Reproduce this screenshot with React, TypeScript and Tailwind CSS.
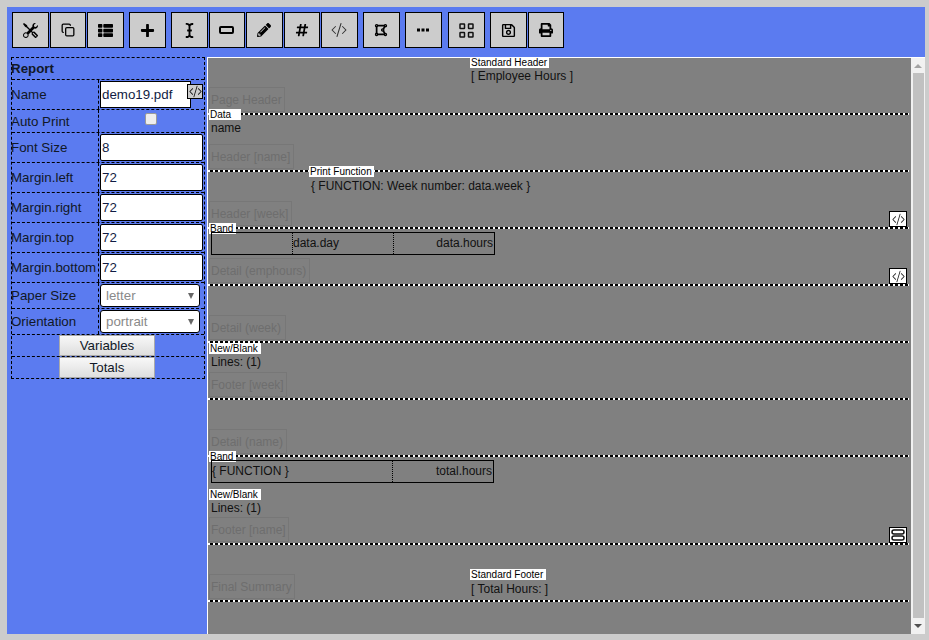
import { FaPlus, FaICursor, FaPencilAlt, FaHashtag, FaDrawPolygon, FaThList, FaRegSave, FaPrint } from 'react-icons/fa'
import { BsCodeSlash, BsTools } from 'react-icons/bs'
import { Copy } from 'lucide-react'
import type { ReactNode } from 'react'

const FONT = "font-['Liberation_Sans',Arial,sans-serif]"

function StackIcon() {
  return (
    <svg width="14" height="12" viewBox="0 0 14 12" fill="none" stroke="#111" strokeWidth="1.500">
      <rect x="1" y="1" width="12" height="4" rx="2" />
      <rect x="1" y="7" width="12" height="4" rx="2" />
    </svg>
  )
}

function DotsIcon() {
  return (
    <svg width="12" height="4" viewBox="0 0 12 4" fill="#000">
      <rect x="0" y="0.500" width="3" height="3" />
      <rect x="4.500" y="0.500" width="3" height="3" />
      <rect x="9" y="0.500" width="3" height="3" />
    </svg>
  )
}

function GridIcon() {
  return (
    <svg width="15" height="15" viewBox="0 0 15 15" fill="none" stroke="#111" strokeWidth="1.500">
      <rect x="1" y="1" width="4.500" height="4.500" rx="0.500" />
      <rect x="9.500" y="1" width="4.500" height="4.500" rx="0.500" />
      <rect x="1" y="9.500" width="4.500" height="4.500" rx="0.500" />
      <rect x="9.500" y="9.500" width="4.500" height="4.500" rx="0.500" />
    </svg>
  )
}

function ToolButton({ children, className = '' }: { children: ReactNode; className?: string }) {
  return (
    <button className={`flex h-[36px] w-[36.500px] shrink-0 items-center justify-center border border-black bg-[#cccccc] text-black ${className}`}>
      {children}
    </button>
  )
}

function PropRow({ label, children, h, labelClass = '' }: { label: string; children: ReactNode; h: string; labelClass?: string }) {
  return (
    <div className={`flex border-b border-dashed border-black ${h}`}>
      <div className="flex w-[87px] shrink-0 items-center border-r border-dashed border-black text-[13.333px] text-[#111827]">
        <span className={`-ml-[1px] ${labelClass}`}>{label}</span>
      </div>
      <div className="flex min-w-0 flex-1 items-center pl-[1px]">{children}</div>
    </div>
  )
}

function NumField({ value }: { value: string }) {
  return (
    <div className="flex h-[27px] w-[103px] items-center rounded-[2px] border border-black bg-white pl-[1px] text-[13.333px] text-[#111c44]">
      {value}
    </div>
  )
}

function SelectField({ value }: { value: string }) {
  return (
    <div className="flex h-[23px] w-[100px] items-center justify-between rounded-[3px] border border-black bg-white pl-[5px] pr-[5px] text-[13.333px] text-[#8a8a8a]">
      <span>{value}</span>
      <span className="h-0 w-0 border-x-[3.500px] border-t-[6px] border-x-transparent border-t-[#666]" />
    </div>
  )
}

function GreyButton({ label }: { label: string }) {
  return (
    <div className="-ml-[2px] flex h-[21px] w-[96px] items-center justify-center border border-[#aaa] bg-gradient-to-b from-[#f8f8f8] to-[#dedede] text-[13.333px] text-[#111827]">
      {label}
    </div>
  )
}

function Tag({ children, className = '' }: { children: ReactNode; className?: string }) {
  return <div className={`absolute bg-white pl-[1px] text-[10px] leading-[11px] text-black ${className}`}>{children}</div>
}

function Ghost({ label, className = '' }: { label: string; className?: string }) {
  return (
    <div className={`absolute bottom-[3px] left-[1px] flex h-[25px] items-center whitespace-nowrap border border-[#777] px-[1px] text-[12px] text-[#6e6e6e] ${className}`}>
      {label}
    </div>
  )
}

function Band({ h, ghost, gw, children }: { h: string; ghost: string; gw: string; children?: ReactNode }) {
  return (
    <div className={`relative ${h}`}>
      <div className="absolute inset-x-0 bottom-0 h-[2px] bg-[repeating-linear-gradient(90deg,#fff_0,#fff_2px,#000_2px,#000_5px)]" />
      <Ghost label={ghost} className={gw} />
      {children}
    </div>
  )
}

function Badge({ children }: { children: ReactNode }) {
  return (
    <div className="absolute bottom-[2px] right-[2px] flex h-[16px] w-[18px] items-center justify-center border border-black bg-white">
      {children}
    </div>
  )
}

export default function App() {
  return (
    <div className={`h-[640px] w-[929px] overflow-hidden bg-[#cccccc] p-[7px] pr-[4px] ${FONT}`}>
      <div className="flex h-[627px] flex-col bg-[#5b7bf0]">
        <div className="flex h-[50px] shrink-0 items-start gap-[1px] pl-[5px] pt-[5px]">
          <ToolButton><BsTools size={15} /></ToolButton>
          <ToolButton><Copy size={14} strokeWidth={2.200} color="#000" /></ToolButton>
          <ToolButton><FaThList size={15} /></ToolButton>
          <ToolButton className="ml-[4.500px]"><FaPlus size={15} /></ToolButton>
          <ToolButton className="ml-[4.500px]"><FaICursor size={15} /></ToolButton>
          <ToolButton>
            <span className="block h-[8px] w-[15px] rounded-[2px] border-2 border-black" />
          </ToolButton>
          <ToolButton><FaPencilAlt size={14} /></ToolButton>
          <ToolButton><FaHashtag size={14} /></ToolButton>
          <ToolButton><BsCodeSlash size={16} color="#333" /></ToolButton>
          <ToolButton className="ml-[4.500px]"><FaDrawPolygon size={14} /></ToolButton>
          <ToolButton className="ml-[4.500px]"><DotsIcon /></ToolButton>
          <ToolButton className="ml-[5.500px]"><GridIcon /></ToolButton>
          <ToolButton className="ml-[4.500px]"><FaRegSave size={15} /></ToolButton>
          <ToolButton><FaPrint size={14} /></ToolButton>
        </div>

        <div className="flex min-h-0 flex-1">
          <div className="w-[200px] shrink-0 pl-[4px]">
            <div className="w-[194px] border border-dashed border-black">
              <div className="flex h-[22px] items-center border-b border-dashed border-black text-[13.333px] font-bold text-[#111827]">
                <span className="-ml-[1px]">Report</span>
              </div>
              <PropRow label="Name" h="h-[30px]">
                <div className="relative">
                  <div className="flex h-[27px] w-[91px] items-center border border-black bg-white pl-[1px] text-[13.333px] text-[#111c44]">
                    demo19.pdf
                  </div>
                  <div className="absolute left-[87px] top-[3px] flex h-[15px] w-[16px] items-center justify-center border border-black bg-[#cccccc]">
                    <BsCodeSlash size={13} color="#111" />
                  </div>
                </div>
              </PropRow>
              <PropRow label="Auto Print" h="h-[23px]" labelClass="mt-[1px]">
                <div className="flex h-full w-full justify-center pr-[2px] pt-[3px]">
                  <span className="block h-[12px] w-[12px] rounded-[2px] border border-[#9a9a9a] bg-[#eeeeee]" />
                </div>
              </PropRow>
              <PropRow label="Font Size" h="h-[30px]"><NumField value="8" /></PropRow>
              <PropRow label="Margin.left" h="h-[30px]"><NumField value="72" /></PropRow>
              <PropRow label="Margin.right" h="h-[30px]"><NumField value="72" /></PropRow>
              <PropRow label="Margin.top" h="h-[30px]"><NumField value="72" /></PropRow>
              <PropRow label="Margin.bottom" h="h-[30px]"><NumField value="72" /></PropRow>
              <PropRow label="Paper Size" h="h-[26px]"><SelectField value="letter" /></PropRow>
              <PropRow label="Orientation" h="h-[26px]"><SelectField value="portrait" /></PropRow>
              <div className="flex h-[22px] justify-center border-b border-dashed border-black"><GreyButton label="Variables" /></div>
              <div className="flex h-[21px] justify-center"><GreyButton label="Totals" /></div>
            </div>
          </div>

          <div className="flex min-w-0 flex-1 border-l border-t border-white">
            <div className="min-w-0 flex-1 overflow-hidden bg-[#808080] pr-[2px] text-[12px] text-[#111]">
              <Band h="h-[57px]" ghost="Page Header" gw="w-[76px]">
                <Tag className="left-[262px] top-[-1px] w-[79px]">Standard Header</Tag>
                <div className="absolute left-[263px] top-[9px]">[ Employee Hours ]</div>
              </Band>
              <Band h="h-[57px]" ghost="Header [name]" gw="w-[85px]">
                <Tag className="left-[1px] top-[-6px] w-[32px]">Data</Tag>
                <div className="absolute left-[3px] top-[4px]">name</div>
              </Band>
              <Band h="h-[57px]" ghost="Header [week]" gw="w-[83px]">
                <Tag className="left-[101px] top-[-6px] w-[65px]">Print Function</Tag>
                <div className="absolute left-[103px] top-[5px]">{'{ FUNCTION: Week number: data.week }'}</div>
                <Badge><BsCodeSlash size={13} color="#222" /></Badge>
              </Band>
              <Band h="h-[57px]" ghost="Detail (emphours)" gw="w-[101px]">
                <Tag className="left-[1px] top-[-6px] w-[27px]">Band</Tag>
                <div className="absolute left-[3px] top-[3px] flex h-[23px] w-[284px] border border-black leading-[21px]">
                  <div className="w-[81px] border-r border-dotted border-black" />
                  <div className="w-[101px] border-r border-dotted border-black">data.day</div>
                  <div className="flex-1 pr-[1px] text-right">data.hours</div>
                </div>
                <Badge><BsCodeSlash size={13} color="#222" /></Badge>
              </Band>
              <Band h="h-[57px]" ghost="Detail (week)" gw="w-[77px]" />
              <Band h="h-[57px]" ghost="Footer [week]" gw="w-[78px]">
                <Tag className="left-[1px] top-0 w-[52px]">New/Blank</Tag>
                <div className="absolute left-[3px] top-[10px]">Lines: (1)</div>
              </Band>
              <Band h="h-[57px]" ghost="Detail (name)" gw="w-[78px]" />
              <Band h="h-[88px]" ghost="Footer [name]" gw="w-[80px]">
                <Tag className="left-[1px] top-[-6px] w-[27px]">Band</Tag>
                <div className="absolute left-[3px] top-[3px] flex h-[23px] w-[283px] border border-black leading-[21px]">
                  <div className="w-[181px] border-r border-dotted border-black">{'{ FUNCTION }'}</div>
                  <div className="flex-1 pr-[1px] text-right">total.hours</div>
                </div>
                <Tag className="left-[1px] top-[32px] w-[52px]">New/Blank</Tag>
                <div className="absolute left-[3px] top-[42px]">Lines: (1)</div>
                <Badge><StackIcon /></Badge>
              </Band>
              <Band h="h-[57px]" ghost="Final Summary" gw="w-[86px]">
                <Tag className="left-[262px] top-[24px] w-[76px]">Standard Footer</Tag>
                <div className="absolute left-[263px] top-[35px]">[ Total Hours: ]</div>
              </Band>
            </div>

            <div className="flex w-[14px] shrink-0 flex-col items-center bg-[#f1f1f1]">
              <div className="flex h-[15px] items-center justify-center">
                <span className="h-0 w-0 border-x-[4px] border-b-[4px] border-x-transparent border-b-[#a3a3a3]" />
              </div>
              <div className="w-[11px] flex-1 bg-[#c1c1c1]" />
              <div className="flex h-[16px] items-center justify-center">
                <span className="h-0 w-0 border-x-[4px] border-t-[4px] border-x-transparent border-t-[#505050]" />
              </div>
            </div>
          </div>
        </div>
      </div>
    </div>
  )
}
